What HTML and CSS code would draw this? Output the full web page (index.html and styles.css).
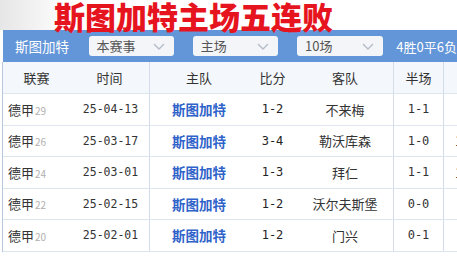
FILE: index.html
```html
<!DOCTYPE html>
<html lang="zh">
<head>
<meta charset="utf-8">
<link rel="stylesheet" href="styles.css">
</head>
<body>
<div class="page">
  <div class="headline"><h1 class="title">斯图加特主场五连败</h1></div>
  <div class="bar">
    <span class="team-label">斯图加特</span>
    <div class="select w87"><span class="opt">本赛事</span><svg class="chev" width="12" height="7" viewBox="0 0 12 7"><path d="M1 1 L6 6 L11 1" fill="none" stroke="#b4bcc8" stroke-width="1.4"/></svg></div>
    <div class="select w87"><span class="opt">主场</span><svg class="chev" width="12" height="7" viewBox="0 0 12 7"><path d="M1 1 L6 6 L11 1" fill="none" stroke="#b4bcc8" stroke-width="1.4"/></svg></div>
    <div class="select w88"><span class="opt">10场</span><svg class="chev" width="12" height="7" viewBox="0 0 12 7"><path d="M1 1 L6 6 L11 1" fill="none" stroke="#b4bcc8" stroke-width="1.4"/></svg></div>
    <span class="stat">4胜0平6负</span>
  </div>
  <div class="table">
    <div class="row head">
      <div class="c c1 ctr">联赛</div>
      <div class="c c2 bd">时间</div>
      <div class="c c3">主队</div>
      <div class="c c4">比分</div>
      <div class="c c5 bd">客队</div>
      <div class="c c6 bd">半场</div>
      <div class="c c7"></div>
    </div>
    <div class="row">
      <div class="c c1">德甲<span class="rank">29</span></div>
      <div class="c c2 bd date">25-04-13</div>
      <div class="c c3 home">斯图加特</div>
      <div class="c c4 score">1-2</div>
      <div class="c c5 bd">不来梅</div>
      <div class="c c6 bd score">1-1</div>
      <div class="c c7"></div>
    </div>
    <div class="row">
      <div class="c c1">德甲<span class="rank">26</span></div>
      <div class="c c2 bd date">25-03-17</div>
      <div class="c c3 home">斯图加特</div>
      <div class="c c4 score">3-4</div>
      <div class="c c5 bd">勒沃库森</div>
      <div class="c c6 bd score">1-0</div>
      <div class="c c7 extra">1</div>
    </div>
    <div class="row">
      <div class="c c1">德甲<span class="rank">24</span></div>
      <div class="c c2 bd date">25-03-01</div>
      <div class="c c3 home">斯图加特</div>
      <div class="c c4 score">1-3</div>
      <div class="c c5 bd">拜仁</div>
      <div class="c c6 bd score">1-1</div>
      <div class="c c7 extra">1</div>
    </div>
    <div class="row">
      <div class="c c1">德甲<span class="rank">22</span></div>
      <div class="c c2 bd date">25-02-15</div>
      <div class="c c3 home">斯图加特</div>
      <div class="c c4 score">1-2</div>
      <div class="c c5 bd">沃尔夫斯堡</div>
      <div class="c c6 bd score">0-0</div>
      <div class="c c7"></div>
    </div>
    <div class="row">
      <div class="c c1">德甲<span class="rank">20</span></div>
      <div class="c c2 bd date">25-02-01</div>
      <div class="c c3 home">斯图加特</div>
      <div class="c c4 score">1-2</div>
      <div class="c c5 bd">门兴</div>
      <div class="c c6 bd score">0-1</div>
      <div class="c c7"></div>
    </div>
  </div>
</div>
</body>
</html>
```
FILE: styles.css
```css
html, body {
  margin: 0;
  padding: 0;
  background: #fff;
  overflow: hidden;
}
.page {
  width: 457px;
  height: 256px;
  overflow: hidden;
  font-family: "Noto Sans CJK SC", "Noto Sans", sans-serif;
  color: #333;
}
.headline {
  height: 30px;
  background: linear-gradient(90deg, #e6e6e6 0, #f4f4f4 40px, #fff 70px);
}
.title {
  margin: 0 0 0 54px;
  font-size: 31px;
  line-height: 32px;
  height: 30px;
  font-weight: 900;
  color: #e6141e;
  white-space: nowrap;
}
.bar {
  height: 32px;
  margin-left: 3px;
  background: #6396d8;
  display: flex;
  align-items: center;
  padding-left: 12px;
  gap: 19px;
  white-space: nowrap;
}
.team-label {
  width: 56px;
  color: #fff;
  font-size: 13.5px;
}
.select {
  height: 20px;
  background: #f3f5f8;
  border-radius: 3px;
  display: flex;
  align-items: center;
  padding: 0 9px 0 8px;
  box-sizing: border-box;
  font-size: 13px;
  color: #555;
}
.opt { flex: 1; line-height: 20px; }
.w87 { width: 87px; }
.w88 { width: 88px; }
.chev { flex: none; margin-top: 1px; }
.stat {
  margin-left: -6px;
  color: #fff;
  font-size: 13px;
}
.table {
  margin-left: 2px;
  border-left: 1px solid #b9c9dd;
}
.row {
  display: grid;
  grid-template-columns: 67px 80px 98px 49px 97px 50px 60px;
  height: 31.5px;
  border-bottom: 1px solid #dde5ee;
  box-sizing: border-box;
}
.row.head {
  height: 32px;
  background: #f4f7fb;
}
.c {
  display: flex;
  align-items: center;
  justify-content: center;
  font-size: 13px;
  white-space: nowrap;
  box-sizing: border-box;
}
.bd { border-right: 1px solid #d3dce8; }
.c1 {
  justify-content: flex-start;
  padding-left: 5px;
}
.c1.ctr {
  justify-content: center;
  padding-left: 0;
}
.rank {
  font-size: 10px;
  color: #b0b0b0;
  margin-left: 1px;
  margin-top: 2px;
}
.date {
  font-family: "DejaVu Sans Mono", "Liberation Mono", monospace;
  font-size: 11.5px;
  color: #333;
  padding-left: 2px;
}
.home {
  color: #2f63c9;
  font-weight: 700;
  font-size: 13.5px;
}
.score {
  font-family: "DejaVu Sans Mono", "Liberation Mono", monospace;
  font-size: 12px;
  color: #222;
}
.c6.score { color: #333; }
.extra {
  justify-content: flex-start;
  padding-left: 11px;
}
```
